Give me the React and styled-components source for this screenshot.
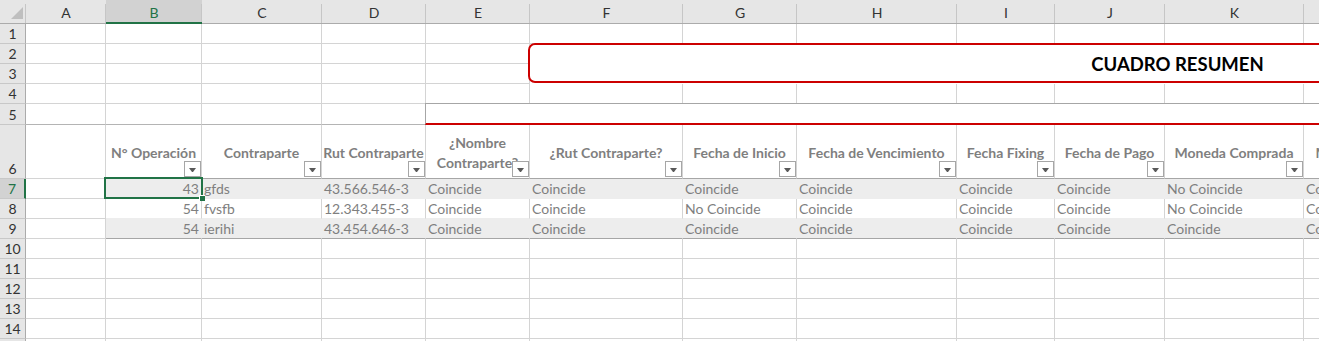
import React from 'react'
import styled, { createGlobalStyle } from 'styled-components'

const GRID = '#d4d4d4'
const EDGE = '#ababab'
const GREEN = '#217346'
const RED = '#cc0000'
const BAND = '#ededed'

const GlobalStyle = createGlobalStyle`
  body {
    margin: 0;
    background: #fff;
    overflow: hidden;
    font-family: Lato, 'Liberation Sans', sans-serif;
  }
  #root {
    width: 1319px;
    height: 341px;
    overflow: hidden;
  }
`

const LETTERS = 'ABCDEFGHIJKL'.split('')
const WIDTHS = [80, 96, 120, 104, 104, 153, 114, 160, 98, 110, 139, 129]

const HEADERS = [
  'N° Operación',
  'Contraparte',
  'Rut Contraparte',
  '¿Nombre Contraparte?',
  '¿Rut Contraparte?',
  'Fecha de Inicio',
  'Fecha de Vencimiento',
  'Fecha Fixing',
  'Fecha de Pago',
  'Moneda Comprada',
  'Moneda Vendida'
]

const ROWS = [
  ['43', 'gfds', '43.566.546-3', 'Coincide', 'Coincide', 'Coincide', 'Coincide', 'Coincide', 'Coincide', 'No Coincide', 'Coincide'],
  ['54', 'fvsfb', '12.343.455-3', 'Coincide', 'Coincide', 'No Coincide', 'Coincide', 'Coincide', 'Coincide', 'No Coincide', 'Coincide'],
  ['54', 'ierihi', '43.454.646-3', 'Coincide', 'Coincide', 'Coincide', 'Coincide', 'Coincide', 'Coincide', 'Coincide', 'Coincide']
]

const Sheet = styled.div`
  display: grid;
  grid-template-columns: 26px ${WIDTHS.map(w => `${w}px`).join(' ')};
  grid-template-rows: 24px 20px 20px 20px 20px 21px 54px repeat(9, 20px);
  width: max-content;
  font-size: 14px;
`

const Corner = styled.div`
  position: relative;
  box-sizing: border-box;
  display: flex;
  align-items: flex-end;
  justify-content: flex-end;
  padding: 0 3px 4px 0;
  background: #e6e6e6;
  border-bottom: 1px solid ${EDGE};
  &::after {
    content: '';
    position: absolute;
    top: 4px;
    right: 0;
    bottom: 0;
    width: 1px;
    background: #c6c6c6;
  }
`

const ColHead = styled.div`
  position: relative;
  box-sizing: border-box;
  display: flex;
  align-items: center;
  justify-content: center;
  padding-top: 2px;
  background: ${p => (p.$active ? '#d2d2d2' : '#e6e6e6')};
  color: ${p => (p.$active ? GREEN : '#333')};
  border-bottom: ${p => (p.$active ? `2px solid ${GREEN}` : `1px solid ${EDGE}`)};
  &::after {
    content: '';
    position: absolute;
    top: 4px;
    right: 0;
    bottom: 0;
    width: 1px;
    background: #c6c6c6;
  }
`

const RowHead = styled.div`
  box-sizing: border-box;
  display: flex;
  align-items: flex-end;
  justify-content: center;
  line-height: 19px;
  background: ${p => (p.$active ? '#d2d2d2' : '#e6e6e6')};
  color: ${p => (p.$active ? GREEN : '#333')};
  border-right: ${p => (p.$active ? `2px solid ${GREEN}` : `1px solid ${EDGE}`)};
  border-bottom: 1px solid #c8c8c8;
`

const Cell = styled.div`
  box-sizing: border-box;
  min-width: 0;
  background: ${p => p.$fill || '#fff'};
  border-right: 1px solid ${p => p.$vline || GRID};
  border-bottom: 1px solid ${p => p.$hline || GRID};
`

const HeadCell = styled(Cell)`
  position: relative;
  display: flex;
  align-items: center;
  justify-content: center;
  padding: 2px 1px 0;
  text-align: center;
  font-weight: 700;
  line-height: 20px;
  color: #7f7f7f;
  white-space: ${p => (p.$wrap ? 'normal' : 'nowrap')};
`

const Filter = styled.span`
  position: absolute;
  right: 0;
  bottom: 1px;
  width: 17px;
  height: 16px;
  box-sizing: border-box;
  display: flex;
  align-items: center;
  justify-content: center;
  border: 1px solid #a6a6a6;
  background: #fff;
  &::after {
    content: '';
    width: 1px;
    margin-top: 1px;
    border-left: 3px solid transparent;
    border-right: 3px solid transparent;
    border-top: 4px solid #595959;
  }
`

const DataCell = styled(Cell)`
  position: relative;
  padding: 0 2px;
  line-height: 19px;
  color: #7f7f7f;
  white-space: nowrap;
  text-align: ${p => (p.$right ? 'right' : 'left')};
`

const Selection = styled.span`
  position: absolute;
  left: -2px;
  top: -2px;
  right: -2px;
  bottom: -1px;
  z-index: 2;
  border: 2px solid ${GREEN};
  &::after {
    content: '';
    position: absolute;
    right: -4px;
    bottom: -4px;
    width: 5px;
    height: 5px;
    background: ${GREEN};
    border-left: 1px solid #fff;
    border-top: 1px solid #fff;
  }
`

const Banner = styled.div`
  grid-row: 3 / 5;
  grid-column: 7 / -1;
  align-self: start;
  justify-self: start;
  position: relative;
  z-index: 1;
  box-sizing: border-box;
  width: 1299px;
  height: 40px;
  margin: -1px 0 0 -2px;
  display: flex;
  align-items: center;
  justify-content: center;
  padding-top: 2px;
  background: #fff;
  border: 2px solid ${RED};
  border-radius: 7px;
  font-size: 18.5px;
  font-weight: 700;
  color: #000;
`

const Band = styled.div`
  grid-row: 6;
  grid-column: 6 / -1;
  position: relative;
  z-index: 1;
  margin: -1px 0 0 -1px;
  background: #fff;
  border-top: 1px solid #a6a6a6;
  border-left: 1px solid #a6a6a6;
  border-bottom: 2px solid ${RED};
`

const blanks = (n, props = {}) =>
  Array.from({ length: n }, (_, i) => <Cell key={`c${i}`} {...props} />)

export default function App() {
  return (
    <>
      <GlobalStyle />
      <Sheet>
        <Corner>
          <svg width="12" height="12" viewBox="0 0 12 12">
            <polygon points="12,0 12,12 0,12" fill="#bfbfbf" />
          </svg>
        </Corner>
        {LETTERS.map(l => (
          <ColHead key={l} $active={l === 'B'}>
            {l}
          </ColHead>
        ))}

        <RowHead>1</RowHead>
        {blanks(12)}
        <RowHead>2</RowHead>
        {blanks(5)}
        <RowHead>3</RowHead>
        {blanks(5)}
        <RowHead>4</RowHead>
        {blanks(12)}
        <RowHead>5</RowHead>
        {blanks(4, { $hline: '#b4b4b4' })}

        <RowHead>6</RowHead>
        <Cell />
        {HEADERS.map((h, i) => (
          <HeadCell key={h} $hline="#a6a6a6" $wrap={i === 3}>
            {h}
            <Filter />
          </HeadCell>
        ))}

        {ROWS.map((row, r) => {
          const shaded = r !== 1
          const fill = shaded ? BAND : '#fff'
          const hline = r === 2 ? '#a6a6a6' : BAND
          return (
            <React.Fragment key={r}>
              <RowHead $active={r === 0}>{7 + r}</RowHead>
              <Cell />
              {row.map((v, c) => (
                <DataCell
                  key={c}
                  $right={c === 0}
                  $fill={fill}
                  $vline={shaded ? BAND : GRID}
                  $hline={hline}
                >
                  {v}
                  {r === 0 && c === 0 && <Selection />}
                </DataCell>
              ))}
            </React.Fragment>
          )
        })}

        {[10, 11, 12, 13, 14, 15].map(n => (
          <React.Fragment key={n}>
            <RowHead>{n}</RowHead>
            {blanks(12)}
          </React.Fragment>
        ))}

        <Banner>CUADRO RESUMEN</Banner>
        <Band />
      </Sheet>
    </>
  )
}
